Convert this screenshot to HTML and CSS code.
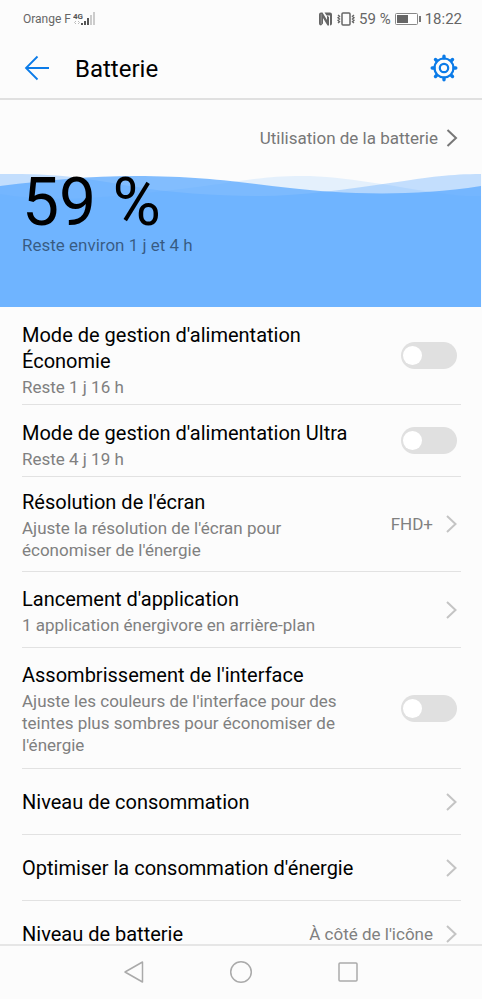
FILE: index.html
```html
<!DOCTYPE html>
<html lang="fr">
<head>
<meta charset="utf-8">
<meta name="viewport" content="width=device-width, initial-scale=1">
<title>Batterie</title>
<link rel="stylesheet" href="styles.css">
</head>
<body>
<div class="status">
  <div class="status-group status-network">
    <span class="carrier">Orange F</span>
    <svg class="signal" width="24" height="16" viewBox="0 0 24 16" aria-hidden="true">
      <text class="net" x="0" y="8">4G</text>
      <path d="M3 10l-1.500 1.500L3 13M5 10l1.500 1.500L5 13" fill="none" stroke="#bbb"/>
      <path d="M8 12h2v2H8zM11 10h2v4h-2zM14 7h2v7h-2z" fill="#555"/>
      <path d="M17 4h2v10h-2zM20 1h2v13h-2z" fill="#ccc"/>
    </svg>
  </div>
  <div class="status-group">
    <svg width="15" height="16" viewBox="0 0 15 16" aria-hidden="true">
      <path d="M1 3.500Q1 1.500 3 1.500h1.500l4.500 7.500V4.500l2 1.500v8.500H9.500L5 7v5.500L3 14.500Q1 14.500 1 12.500z" fill="#666"/>
      <path d="M6.500 1.500H12q2 0 2 2v9q0 2-2 2V4.500H8.500z" fill="#666"/>
      <path d="M3.200 3v10" stroke="#aaa" stroke-width=".7"/>
    </svg>
    <svg class="vibrate" width="18" height="16" viewBox="0 0 18 16" aria-hidden="true">
      <rect x="5" y="2" width="8" height="12" rx="1" fill="none" stroke="#666" stroke-width="1.500"/>
      <path d="M1 4l1.500 1.300L1 6.700 2.500 8 1 9.300l1.500 1.400L1 12M17 4l-1.500 1.300L17 6.700 15.500 8 17 9.300l-1.500 1.400L17 12" fill="none" stroke="#666" stroke-width="1.400"/>
    </svg>
    <span>59&nbsp;%</span>
    <svg class="cell" width="26" height="12" viewBox="0 0 26 12" aria-hidden="true">
      <rect x=".5" y=".5" width="22" height="11" rx="1" fill="#fff" stroke="#888"/>
      <path d="M2 2h11v8H2z" fill="#666"/>
      <path d="M24 3h2v6h-2z" fill="#777"/>
    </svg>
    <span>18:22</span>
  </div>
</div>

<header class="header">
  <button class="icon-button" type="button" aria-label="Retour">
    <svg width="26" height="26" viewBox="0 0 26 26" aria-hidden="true">
      <path d="M13.500 1.500L2 13l11.500 11.500M2 13h23" fill="none" stroke="#0b7be8" stroke-width="1.800"/>
    </svg>
  </button>
  <h1>Batterie</h1>
  <button class="icon-button" type="button" aria-label="Paramètres">
    <svg width="28" height="28" viewBox="-14 -14 28 28" aria-hidden="true">
      <g fill="none" stroke="#0b7be8" stroke-width="2.200">
        <circle r="9.500"/>
        <circle r="4.200"/>
      </g>
      <path d="M0-11.800V-10M0 11.800V10M-11.800 0H-10M11.800 0H10M-8.500-8.500L-7.500-7.500M8.500 8.500L7.500 7.500M8.500-8.500L7.500-7.500M-8.500 8.500L-7.500 7.500" stroke="#0b7be8" stroke-width="3.400" stroke-linecap="round"/>
    </svg>
  </button>
</header>

<main class="content">
  <section class="hero">
    <a class="usage" href="#utilisation">Utilisation de la batterie
      <svg width="12" height="18" viewBox="0 0 12 18" aria-hidden="true"><path d="M1.500 1l8.500 8-8.500 8" fill="none" stroke="#777" stroke-width="2"/></svg>
    </a>
    <div class="tank">
      <svg class="waves" viewBox="0 0 481 137" preserveAspectRatio="none" aria-hidden="true">
        <g fill="#58a7ff">
          <path fill-opacity=".14" d="M0 24C60 34 120 26 180 19S260 6 302 6s95 11 130 16 35 4 49 4V137H0z"/>
          <path fill-opacity=".35" d="M0 4C60 3 90 9 130 16S220 26 260 26s90-7 130-13 61-9 91-9V137H0z"/>
          <path fill-opacity=".74" d="M0 16C50 10 90 6 135 6c70 0 110 7 155 12s115 10 191-2V137H0z"/>
        </g>
      </svg>
      <p class="percent">59&nbsp;%</p>
      <p class="remaining">Reste environ 1 j et 4 h</p>
    </div>
  </section>

  <ul class="list">
    <li class="row row-mode">
      <label class="text" for="eco"><span class="title">Mode de gestion d'alimentation Économie</span><span class="sub">Reste 1 j 16 h</span></label>
      <input class="switch" id="eco" type="checkbox" role="switch">
    </li>
    <li class="row row-mode">
      <label class="text" for="ultra"><span class="title">Mode de gestion d'alimentation Ultra</span><span class="sub">Reste 4 j 19 h</span></label>
      <input class="switch" id="ultra" type="checkbox" role="switch">
    </li>
    <li><a class="row row-tight" href="#resolution">
      <span class="text"><span class="title">Résolution de l'écran</span><span class="sub">Ajuste la résolution de l'écran pour économiser de l'énergie</span></span>
      <span class="value">FHD+</span>
      <svg class="chevron" width="12" height="18" viewBox="0 0 12 18" aria-hidden="true"><path d="M2 1l8.500 8L2 17"/></svg>
    </a></li>
    <li><a class="row" href="#lancement">
      <span class="text"><span class="title">Lancement d'application</span><span class="sub">1 application énergivore en arrière-plan</span></span>
      <svg class="chevron" width="12" height="18" viewBox="0 0 12 18" aria-hidden="true"><path d="M2 1l8.500 8L2 17"/></svg>
    </a></li>
    <li class="row row-tall">
      <label class="text" for="sombre"><span class="title">Assombrissement de l'interface</span><span class="sub">Ajuste les couleurs de l'interface pour des teintes plus sombres pour économiser de l'énergie</span></label>
      <input class="switch" id="sombre" type="checkbox" role="switch">
    </li>
    <li><a class="row row-single" href="#niveau">
      <span class="text title">Niveau de consommation</span>
      <svg class="chevron" width="12" height="18" viewBox="0 0 12 18" aria-hidden="true"><path d="M2 1l8.500 8L2 17"/></svg>
    </a></li>
    <li><a class="row row-single" href="#optimiser">
      <span class="text title">Optimiser la consommation d'énergie</span>
      <svg class="chevron" width="12" height="18" viewBox="0 0 12 18" aria-hidden="true"><path d="M2 1l8.500 8L2 17"/></svg>
    </a></li>
    <li><a class="row row-single" href="#affichage">
      <span class="text title">Niveau de batterie</span>
      <span class="value">À côté de l'icône</span>
      <svg class="chevron" width="12" height="18" viewBox="0 0 12 18" aria-hidden="true"><path d="M2 1l8.500 8L2 17"/></svg>
    </a></li>
  </ul>
</main>

<nav class="navbar" aria-label="Navigation système">
  <button class="icon-button" type="button" aria-label="Précédent">
    <svg width="22" height="24" viewBox="0 0 22 24" aria-hidden="true"><path d="M19.500 2v20L2 12z"/></svg>
  </button>
  <button class="icon-button" type="button" aria-label="Accueil">
    <svg width="24" height="24" viewBox="0 0 24 24" aria-hidden="true"><circle cx="12" cy="12" r="10.300"/></svg>
  </button>
  <button class="icon-button" type="button" aria-label="Applications récentes">
    <svg width="22" height="24" viewBox="0 0 22 24" aria-hidden="true"><rect x="2" y="3" width="18" height="18" rx="1"/></svg>
  </button>
</nav>
</body>
</html>
```
FILE: styles.css
```css
* {
  box-sizing: border-box;
}

body {
  margin: 0;
  height: 100vh;
  display: flex;
  flex-direction: column;
  background: #fcfcfc;
  color: #000;
  font-family: Roboto, "Liberation Sans", sans-serif;
}

h1,
p,
ul {
  margin: 0;
  padding: 0;
  font-weight: 400;
}

ul {
  list-style: none;
}

a {
  color: inherit;
  text-decoration: none;
}

svg {
  display: block;
  flex: none;
}

.icon-button {
  display: block;
  padding: 0;
  border: 0;
  background: none;
}

.status {
  flex: none;
  display: flex;
  justify-content: space-between;
  align-items: center;
  height: 37px;
  padding: 0 20px 0 23px;
  color: #666;
  font-size: 15px;
}

.status-group {
  display: flex;
  align-items: center;
  gap: 4px;
}

.status-network {
  gap: 2px;
}

.carrier {
  font-size: 12px;
}

.net {
  font-size: 8px;
  font-weight: 700;
  fill: #555;
}

.header {
  flex: none;
  display: flex;
  align-items: center;
  gap: 25px;
  height: 63px;
  padding: 0 24px;
  border-bottom: 2px solid #e0e0e0;
}

.header h1 {
  flex: 1;
  padding-top: 3px;
  font-size: 24px;
  line-height: 32px;
}

.content {
  flex: 1;
  min-height: 0;
  overflow-y: auto;
  scrollbar-width: none;
}

.usage {
  display: flex;
  justify-content: flex-end;
  align-items: center;
  gap: 8px;
  height: 70px;
  padding: 6px 24px 0 0;
  color: #777;
  font-size: 17px;
}

.tank {
  position: relative;
  height: 137px;
  margin-right: 1px;
  padding: 0 22px;
}

.waves {
  position: absolute;
  inset: 0;
  width: 100%;
  height: 100%;
}

.percent {
  position: relative;
  font-size: 66px;
  line-height: 66px;
}

.remaining {
  position: relative;
  color: rgba(0, 0, 0, 0.5);
  font-size: 17px;
  line-height: 18px;
}

.list {
  padding: 0 21px 0 22px;
}

.row {
  display: flex;
  align-items: center;
  padding-right: 4px;
  border-bottom: 1px solid #e2e2e2;
}

.text {
  flex: 1;
  margin-right: 20px;
  padding: 14px 0 11px;
}

.row-mode .text {
  padding: 15px 0 6px;
}

.row-tight .text {
  padding: 12px 0 10px;
}

.row-tall .text {
  padding: 14px 0 12px;
}

.row-single {
  min-height: 66px;
}

.row-single .text {
  padding: 0;
}

.title {
  display: block;
  font-size: 20px;
  line-height: 26px;
}

.sub {
  display: block;
  margin-top: 2px;
  color: #808080;
  font-size: 17px;
  line-height: 22px;
}

.value {
  margin-right: 12px;
  color: #808080;
  font-size: 17px;
}

.chevron {
  fill: none;
  stroke: #c4c4c4;
  stroke-width: 2;
}

.switch {
  appearance: none;
  flex: none;
  display: flex;
  align-items: center;
  width: 56px;
  height: 27px;
  margin: 0;
  padding: 0 2px;
  border-radius: 14px;
  background: #e0e0e0;
}

.switch::before {
  content: "";
  width: 19px;
  height: 19px;
  border-radius: 50%;
  background: #fff;
}

.switch:checked {
  justify-content: flex-end;
  background: #0b7be8;
}

.navbar {
  flex: none;
  display: flex;
  justify-content: center;
  align-items: center;
  gap: 84px;
  height: 55px;
  padding-bottom: 2px;
  border-top: 2px solid #e6e6e6;
}

.navbar svg {
  fill: none;
  stroke: #aaa;
  stroke-width: 1.5;
  stroke-linejoin: round;
}
```
